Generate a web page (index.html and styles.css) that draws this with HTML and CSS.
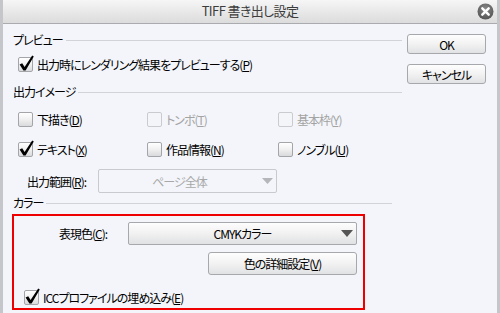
FILE: index.html
```html
<!DOCTYPE html>
<html lang="ja">
<head>
<meta charset="utf-8">
<title>TIFF 書き出し設定</title>
<link rel="stylesheet" href="styles.css">
</head>
<body>
<div class="window">
  <div class="titlebar">
    <span></span>
    <span class="title">TIFF 書き出し設定</span>
    <span class="close"><svg width="17" height="17" viewBox="0 0 17 17"><defs><radialGradient id="cg" cx="50%" cy="35%" r="65%"><stop offset="0" stop-color="#8a8a8a"/><stop offset="1" stop-color="#555"/></radialGradient></defs><circle cx="8.5" cy="8.5" r="8" fill="url(#cg)"/><path d="M5.3 5.3 L11.7 11.7 M11.7 5.3 L5.3 11.7" stroke="#fff" stroke-width="2.4" stroke-linecap="round"/></svg></span>
  </div>
  <div class="content">
    <div class="main">
      <div class="group-head"><span>プレビュー</span><i class="rule"></i></div>
      <div class="check preview-row"><span class="box"><svg class="tick" width="17" height="17" viewBox="0 -2 17 17"><path d="M1.6 7.4 L4.2 6.2 L6.6 10 L14.2 -1.6 L15.8 -0.4 L7.6 13.6 L5.4 13.6 Z" fill="#000"/></svg></span><span>出力時にレンダリング結果をプレビューする(<u>P</u>)</span></div>

      <div class="group-head"><span>出力イメージ</span><i class="rule"></i></div>
      <div class="check-grid">
        <div class="check"><span class="box"></span><span>下描き(<u>D</u>)</span></div>
        <div class="check disabled"><span class="box"></span><span>トンボ(<u>T</u>)</span></div>
        <div class="check disabled"><span class="box"></span><span>基本枠(<u>Y</u>)</span></div>
        <div class="check"><span class="box"><svg class="tick" width="17" height="17" viewBox="0 -2 17 17"><path d="M1.6 7.4 L4.2 6.2 L6.6 10 L14.2 -1.6 L15.8 -0.4 L7.6 13.6 L5.4 13.6 Z" fill="#000"/></svg></span><span>テキスト(<u>X</u>)</span></div>
        <div class="check"><span class="box"></span><span>作品情報(<u>N</u>)</span></div>
        <div class="check"><span class="box"></span><span>ノンブル(<u>U</u>)</span></div>
      </div>
      <div class="range-row">
        <span class="range-label">出力範囲(<u>R</u>):</span>
        <div class="select disabled range-select"><span class="select-text shifted">ページ全体</span><svg class="arrow" width="11" height="6" viewBox="0 0 11 6"><path d="M0 0 H11 L5.5 6 Z" fill="#b4b6b9"/></svg></div>
      </div>

      <div class="group-head short"><span>カラー</span><i class="rule"></i></div>
      <div class="color-box">
        <div class="color-row">
          <span class="color-label">表現色(<u>C</u>):</span>
          <div class="select color-select"><span class="select-text balanced">CMYKカラー</span><svg class="arrow" width="12" height="7" viewBox="0 0 12 7"><path d="M0 0 H12 L6 7 Z" fill="#555"/></svg></div>
        </div>
        <div class="btn detail-btn">色の詳細設定(<u>V</u>)</div>
        <div class="check icc-row"><span class="box"><svg class="tick" width="17" height="17" viewBox="0 -2 17 17"><path d="M1.6 7.4 L4.2 6.2 L6.6 10 L14.2 -1.6 L15.8 -0.4 L7.6 13.6 L5.4 13.6 Z" fill="#000"/></svg></span><span>ICCプロファイルの埋め込み(<u>E</u>)</span></div>
      </div>
    </div>
    <div class="side">
      <div class="btn side-btn">OK</div>
      <div class="btn side-btn">キャンセル</div>
    </div>
  </div>
</div>
</body>
</html>
```
FILE: styles.css
```css
* { box-sizing: border-box; }
html, body { margin: 0; padding: 0; }
body {
  width: 500px;
  height: 313px;
  overflow: hidden;
  font-family: "Noto Sans CJK JP", "Liberation Sans", sans-serif;
  font-size: 12px;
  font-feature-settings: "palt";
  letter-spacing: -1px;
  color: #000;
  background: #f3f5fa;
}
u { text-underline-offset: 1px; }
.window {
  width: 500px;
  height: 313px;
  display: flex;
  flex-direction: column;
  border-left: 3px solid #c4c6c9;
  border-right: 3px solid #c4c6c9;
  background: #f3f5fa;
}
.titlebar {
  height: 24px;
  flex: none;
  display: grid;
  grid-template-columns: 1fr auto 1fr;
  align-items: center;
  background: linear-gradient(#f6f6f6, #e6e6e6 60%, #dcdcdc);
  border-bottom: 1px solid #a9abae;
}
.title {
  font-size: 13px;
  letter-spacing: -0.6px;
  color: #3c3c3c;
  line-height: 16px;
  padding-bottom: 1px;
}
.close {
  justify-self: end;
  display: flex;
  margin-right: 3px;
  padding-bottom: 1px;
}
.content {
  flex: 1;
  display: flex;
}
.main {
  width: 399px;
  flex: none;
  padding-left: 10px;
  display: flex;
  flex-direction: column;
}
.group-head {
  display: flex;
  align-items: center;
  height: 14px;
  line-height: 14px;
  margin-top: 9px;
}
.rule {
  flex: 1;
  height: 1px;
  margin-left: 3px;
  background: #d0d3d8;
}
.group-head.short { margin-right: 10px; margin-top: 3px; }
.check {
  display: flex;
  align-items: center;
  height: 15px;
  line-height: 15px;
  white-space: nowrap;
}
.box {
  width: 15px;
  height: 15px;
  flex: none;
  position: relative;
  margin-right: 4px;
  border: 1px solid #a3a5a8;
  border-radius: 2px;
  background: linear-gradient(#ffffff, #f2f2f2 45%, #d9dadc);
}
.tick {
  position: absolute;
  left: -1px;
  top: -3px;
  overflow: visible;
}
.check.disabled { color: #a3a3a3; }
.check.disabled .box {
  border-color: #c9cbce;
  background: #f4f5f8;
}
.preview-row { margin-top: 10px; margin-left: 5px; }
.preview-row + .group-head { margin-top: 13px; }
.check-grid {
  margin-top: 13px;
  margin-left: 5px;
  display: grid;
  grid-template-columns: 129px 131px auto;
  row-gap: 15px;
}
.range-row {
  display: flex;
  align-items: center;
  margin-top: 12px;
  height: 24px;
}
.range-label {
  width: 85px;
  padding-left: 14px;
  flex: none;
  white-space: nowrap;
}
.select {
  display: flex;
  align-items: center;
  height: 100%;
  border: 1px solid #a6a8ab;
  border-radius: 2px;
  background: linear-gradient(#fdfdfd, #f1f1f1 50%, #e0e1e3);
}
.select.disabled {
  border-color: #c8cacd;
  background: #f3f5fa;
  color: #a8a8a8;
}
.range-select { width: 179px; }
.select-text {
  flex: 1;
  text-align: center;
}
.select-text.shifted { padding-right: 2px; }
.select-text.balanced { padding-left: 15px; }
.arrow { margin-right: 3px; flex: none; }
.color-box {
  margin-top: 4px;
  margin-left: -1px;
  width: 353px;
  border: 2px solid #ee0000;
  padding: 6px 6px 3px 0;
  display: flex;
  flex-direction: column;
}
.color-row {
  display: flex;
  align-items: center;
  height: 23px;
}
.color-label {
  width: 114px;
  padding-left: 45px;
  flex: none;
  white-space: nowrap;
}
.color-select { flex: 1; }
.btn {
  display: flex;
  align-items: center;
  justify-content: center;
  border: 1px solid #a6a8ab;
  border-radius: 3px;
  background: linear-gradient(#fefefe, #f2f2f2 50%, #e1e2e4);
  white-space: nowrap;
}
.detail-btn {
  align-self: flex-end;
  width: 149px;
  height: 23px;
  margin-top: 7px;
}
.icc-row { margin-top: 15px; margin-left: 10px; }
.side {
  display: flex;
  flex-direction: column;
  padding-left: 5px;
}
.side-btn {
  width: 79px;
  height: 20px;
  margin-top: 10px;
}
```
